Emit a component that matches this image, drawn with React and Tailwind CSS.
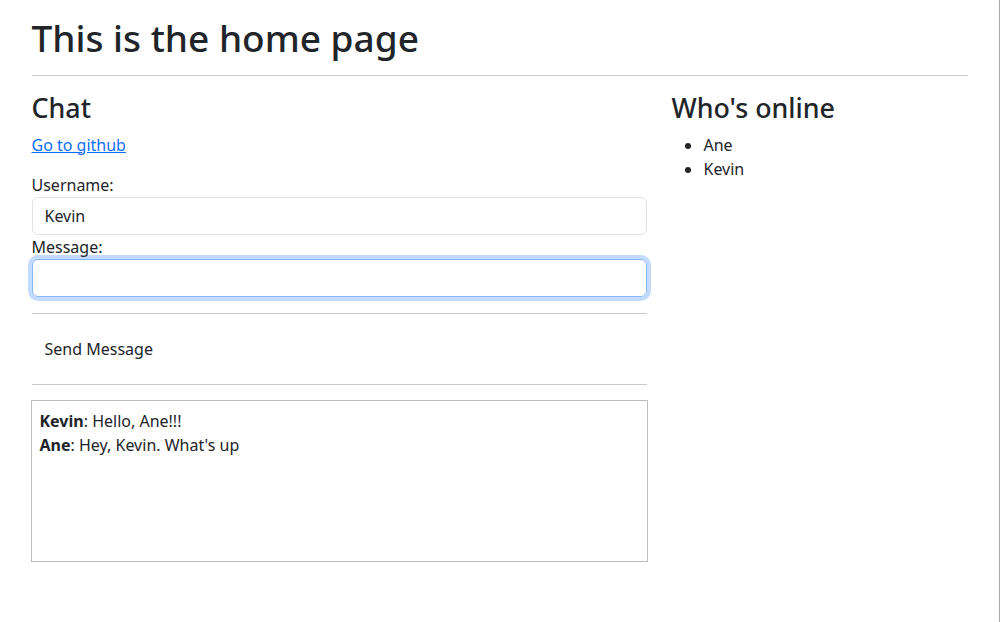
import React from 'react';

const messages = [
  { user: 'Kevin', text: 'Hello, Ane!!!' },
  { user: 'Ane', text: "Hey, Kevin. What's up" },
];

const online = ['Ane', 'Kevin'];

export default function App() {
  return (
    <div
      className="min-h-screen bg-white text-[#212529] border-r border-[#a9a9a9] text-base leading-6"
      style={{ fontFamily: '"Noto Sans", "Open Sans", sans-serif' }}
    >
      <div className="w-[960px] mx-auto px-3 pt-4">
        <h1 className="text-[37px] leading-[1.2] font-medium">This is the home page</h1>
        <hr className="mt-[15px] border-t border-[#c8c9ca]" />

        <div className="flex -mx-3">
          {/* chat column */}
          <div className="w-2/3 px-3">
            <h3 className="mt-4 mb-2 text-[26.8px] leading-[1.2] font-medium">Chat</h3>
            <p>
              <a href="#" className="text-[#0d6efd] underline">Go to github</a>
            </p>

            <form className="mt-4" onSubmit={(e) => e.preventDefault()}>
              <label className="block">Username:</label>
              <input
                className="block w-full h-[38px] px-3 border border-[#dee2e6] rounded-md outline-none"
                defaultValue="Kevin"
              />
              <label className="block">Message:</label>
              <input
                className="block w-full h-[38px] px-3 border border-[#86b7fe] rounded-md outline-none shadow-[0_0_0_4px_rgba(13,110,253,0.25)]"
              />
              <hr className="my-4 border-t border-[#c8c9ca]" />
              <button type="submit" className="h-[38px] px-3 border border-transparent rounded-md">
                Send Message
              </button>
              <hr className="mt-4 mb-[15px] border-t border-[#c8c9ca]" />
            </form>

            <div className="-ml-px w-[calc(100%+2px)] h-[162px] border border-[#bdbdbd] px-2 pt-2 overflow-y-auto">
              {messages.map((m, i) => (
                <div key={i}>
                  <b className="font-bold">{m.user}</b>: {m.text}
                </div>
              ))}
            </div>
          </div>

          {/* online column */}
          <div className="w-1/3 px-3">
            <h3 className="mt-4 mb-2 text-[26.8px] leading-[1.2] font-medium">Who's online</h3>
            <ul className="list-disc pl-8">
              {online.map((name) => (
                <li key={name}>{name}</li>
              ))}
            </ul>
          </div>
        </div>
      </div>
    </div>
  );
}
